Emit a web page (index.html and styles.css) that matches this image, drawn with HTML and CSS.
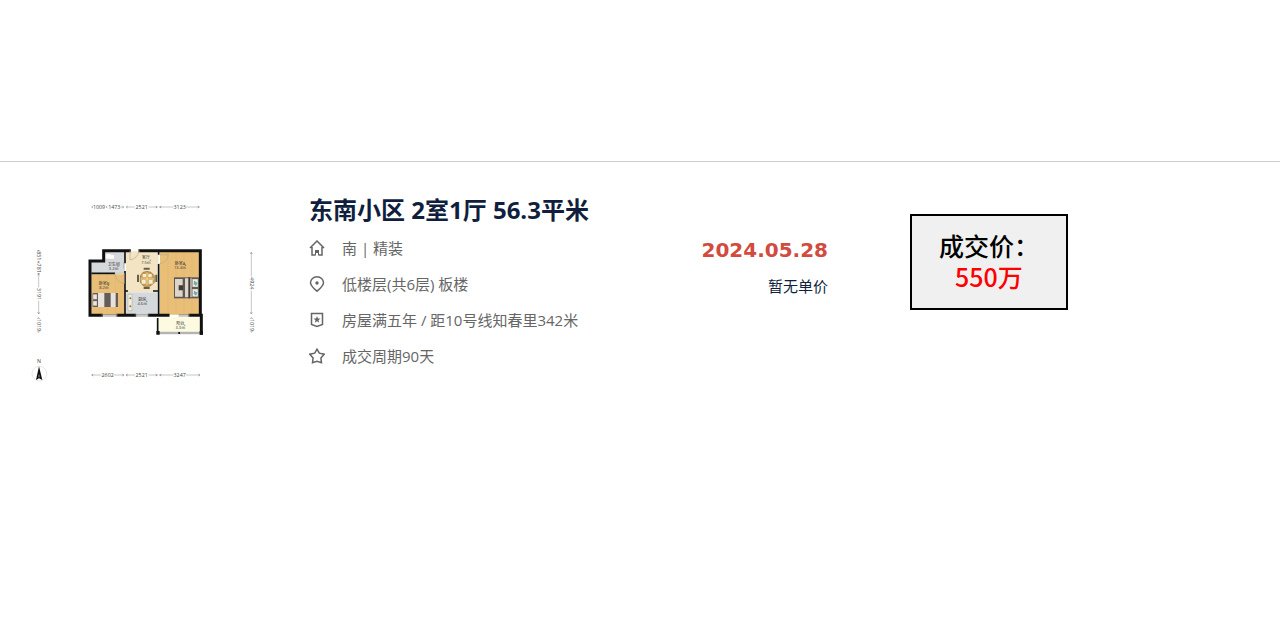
FILE: index.html
```
<!DOCTYPE html>
<html lang="zh-CN">
<head>
    <meta charset="UTF-8">
    <meta name="viewport" content="width=device-width, initial-scale=1.0">
    <title>成交记录</title>
    <link rel="stylesheet" href="styles.css">
</head>
<body>
<main class="record">
    <!-- Floor plan -->
    <svg class="plan" viewBox="0 0 750 600" role="img" aria-label="户型图">
        <!-- Floors -->
        <path fill="#d5d9dc" d="M253 184h62v65H214v-34h39z"/>
        <path fill="#e9bf78" d="M214 253h100v122H214zM420 186h121v188H420z"/>
        <path fill="#f3e5c4" d="M318 184h98v123h-98z"/>
        <path fill="#d5d9dc" d="M318 307h96v66h-96z"/>
        <path fill="#fcfbe2" d="M415 382h128v45H415z"/>
        <path class="boards" d="M444 186v188M468 186v188M492 186v188M516 186v188M238 253v122M262 253v122M286 253v122"/>

        <!-- Walls -->
        <path class="wall" d="M328 182h-77v31h-41v163h34M294 376h50M388 376h56M360 182h181v194h-31M544 376v54"/>
        <path class="wall-thin" d="M315 182v38M315 243v133M214 250h71M416 182v12M416 222v154M316 303h8M399 303h16M413 384v48"/>
        <path class="window" d="M244 374h50M244 378h50M344 374h44M344 378h44M476 374h34M476 378h34M414 427h130M414 431h130"/>
        <path fill="#111" d="M409 423h10v11h-10zM539 423h10v11h-10zM475 426h5v6h-5z"/>

        <!-- Doors -->
        <path class="door" d="M330 182v28q22-4 28-28M417 194h28q-3 24-28 28M285 250h28v31q-26-4-28-31M311 216v20"/>

        <!-- Bathroom -->
        <path fill="#fff" stroke="#bbb" d="M257 191h14l3 3h9v13h-26z"/>

        <!-- Beds -->
        <path fill="#655c57" d="M218 309h76v42h-76z"/>
        <path fill="#e7e2de" d="M234 309h19v42h-19zM272 309h15v42h-15z"/>
        <path fill="#f1e5e1" stroke="#777" d="M219 313h12v15h-12zM219 333h12v14h-12z"/>
        <path fill="#5f5652" d="M462 262h75v63h-75z"/>
        <path fill="#ddd5ca" d="M465 267h23v53h-23zM495 265h20v57h-20z"/>
        <path fill="#3f3b3a" d="M476 286h13v15h-13zM505 262h6v63h-6z"/>
        <path fill="#f0e9dc" stroke="#777" d="M517 267h17v24h-17zM517 297h17v23h-17z"/>
        <path fill="#6badb5" d="M522 272l11 6-5 10-7-6zM522 302l11 6-5 9-7-6z"/>

        <!-- Dining table -->
        <path fill="#c99d55" stroke="#94763f" stroke-width="2" d="M369 247l12-3 12 3 10 10v20l-10 10-12 4-12-4-8-10v-20z"/>
        <path fill="#f8edcf" d="M368 252h10v10h-10zM385 252h10v10h-10zM365 270h12v11h-12zM386 270h12v11h-12z"/>
        <path fill="none" stroke="#f4d99a" stroke-width="3" d="M381 248v38M362 267h40"/>
        <path class="chair" d="M371 236h18M371 294h18M354 254v22M409 254v22"/>
        <path fill="#f4efdb" stroke="#8b8566" d="M324 313h12v49h-12z"/>
        <circle cx="331" cy="325" r="3" fill="#7a7657"/>
        <circle cx="331" cy="349" r="3" fill="#7a7657"/>

        <!-- Room labels -->
        <g class="room">
            <text x="281" y="227">卫生间</text><text x="281" y="240">3.2㎡</text>
            <text x="378" y="208">客厅</text><text x="378" y="221">7.5㎡</text>
            <text x="480" y="224">卧室A</text><text x="480" y="237">13.4㎡</text>
            <text x="252" y="285">卧室B</text><text x="252" y="298">8.2㎡</text>
            <text x="367" y="332">厨房</text><text x="367" y="344">4.6㎡</text>
            <text x="481" y="405">阳台</text><text x="481" y="417">3.3㎡</text>
        </g>

        <!-- Dimensions -->
        <path class="dim-line" d="M302 51h10M318 51h26M386 51h26M418 51h42M498 51h40M216 555h28M282 555h30M318 555h27M386 555h27M418 555h42M498 555h42M56 250v42M56 332v40M694 187v72M694 302v70"/>
        <path class="dim-arrow" d="M219 48l-4 3 4 3M262 48l-4 3 4 3M307 48l4 3-4 3M323 48l-4 3 4 3M407 48l5 3-5 3M424 48l-5 3 5 3M533 48l5 3-5 3M220 552l-5 3 5 3M307 552l5 3-5 3M323 552l-5 3 5 3M407 552l5 3-5 3M424 552l-5 3 5 3M535 552l5 3-5 3M53 256l3-4 3 4M53 367l3 5 3-5M691 192l3-5 3 5M691 367l3 5 3-5"/>
        <g class="dim">
            <text x="237" y="56">1009</text><text x="283" y="56">1473</text><text x="365" y="56">2521</text><text x="479" y="56">3123</text>
            <text x="263" y="560">2602</text><text x="365" y="560">2521</text><text x="479" y="560">3247</text>
            <text transform="translate(52 216) rotate(90)">‹851›‹781›</text>
            <text transform="translate(52 312) rotate(90)">3191</text>
            <text transform="translate(52 405) rotate(90)">‹1019›</text>
            <text transform="translate(690 280) rotate(90)">4924</text>
            <text transform="translate(690 405) rotate(90)">‹1019›</text>
            <text x="57" y="519">N</text>
        </g>

        <!-- Compass -->
        <circle cx="58" cy="551" r="22" fill="#fff" stroke="#ddd" stroke-width="2"/>
        <path fill="#111" d="M57 529l10 41-10-5-9 5z"/>
        <path fill="#ccc" d="M56 554h2v9l-1-1-1 1z"/>
    </svg>

    <!-- House information -->
    <section class="info">
        <h1>东南小区 2室1厅 56.3平米</h1>
        <ul>
            <li>
                <svg class="icon" viewBox="0 0 16 16" aria-hidden="true"><path d="M1 8l7-7 7 7M3 7v8h3M13 7v8h-3"/><path class="solid" d="M6 10h4v5.500H9V13H7v2.500H6z"/></svg>
                <span>南 | 精装</span>
            </li>
            <li>
                <svg class="icon" viewBox="0 0 16 16" aria-hidden="true"><path d="M8 15.200C5.500 13 1.500 10 1.500 6.800a6.500 6 0 0 1 13 0C14.500 10 10.500 13 8 15.200z"/><circle class="solid" cx="8" cy="7" r="1.700"/></svg>
                <span>低楼层(共6层) 板楼</span>
            </li>
            <li>
                <svg class="icon" viewBox="0 0 16 16" aria-hidden="true"><path d="M2.500 1.500h11v11L8 14.500l-5.500-2z"/><path class="solid" d="M8 4l1 2.500 2.500.1-2 1.600.7 2.500L8 9.300l-2.200 1.400.7-2.500-2-1.600L7 6.500z"/></svg>
                <span>房屋满五年 / 距10号线知春里342米</span>
            </li>
            <li>
                <svg class="icon" viewBox="0 0 16 16" aria-hidden="true"><path d="M8 1.200l2.300 4 4.900 1-3.300 3.700.6 4.800L8 13.300l-4.500 1.400.6-4.800L.8 6.200l4.900-1z"/></svg>
                <span>成交周期90天</span>
            </li>
        </ul>
    </section>

    <!-- Deal date -->
    <section class="deal">
        <time class="deal-date" datetime="2024-05-28">2024.05.28</time>
        <span class="unit-price">暂无单价</span>
    </section>

    <!-- Deal price -->
    <section class="price">
        <div>成交价：</div>
        <div class="price-value">550万</div>
    </section>
</main>
</body>
</html>
```
FILE: styles.css
```
body {
    margin: 0;
    font-family: "Open Sans", "Noto Sans CJK SC", sans-serif;
    background-color: #fff;
}

.record {
    display: flex;
    align-items: flex-start;
    margin-top: 161px;
    padding: 28px 212px 28px 20px;
    border-top: 1px solid #ccc;
}

.plan {
    flex: none;
    width: 250px;
    height: 200px;
    margin-right: 39px;
}

.wall {
    fill: none;
    stroke: #111;
    stroke-width: 9;
    stroke-linecap: square;
}

.wall-thin {
    fill: none;
    stroke: #111;
    stroke-width: 5;
}

.window {
    stroke: #777;
    stroke-width: 2;
}

.door {
    fill: none;
    stroke: #b5a98d;
    stroke-width: 2;
}

.boards {
    stroke: #dfae66;
    stroke-width: 1;
}

.chair {
    stroke: #665f50;
    stroke-width: 6;
}

.room {
    fill: #333;
    font-size: 12px;
    text-anchor: middle;
}

.dim {
    fill: #444;
    font-size: 16px;
    text-anchor: middle;
}

.dim-line {
    stroke: #aaa;
    stroke-width: 2;
}

.dim-arrow {
    fill: none;
    stroke: #888;
    stroke-width: 2;
}

.info {
    flex: 1;
}

.info h1 {
    margin: 0;
    color: #0f1f3d;
    font-size: 24px;
    line-height: 40px;
    white-space: nowrap;
}

.info ul {
    margin: 0;
    padding: 0;
    list-style: none;
}

.info li {
    display: flex;
    align-items: center;
    gap: 17px;
    color: #666;
    font-size: 15px;
    line-height: 36px;
    white-space: nowrap;
}

.icon {
    width: 16px;
    height: 16px;
    fill: none;
    stroke: #666;
    stroke-width: 1.5;
}

.icon .solid {
    fill: #666;
    stroke: none;
}

.deal {
    display: flex;
    flex-direction: column;
    align-items: flex-end;
    margin: 42px 82px 0 20px;
    line-height: 36px;
}

.deal-date {
    color: #d14b40;
    font-family: "DejaVu Sans", sans-serif;
    font-size: 20px;
    font-weight: bold;
}

.unit-price {
    color: #0f1f3d;
    font-size: 15px;
}

.price {
    box-sizing: border-box;
    width: 158px;
    margin-top: 24px;
    padding: 14px 0 16px;
    border: 2px solid #000;
    background-color: #f0f0f0;
    font-family: "Noto Sans CJK SC", sans-serif;
    font-size: 25px;
    font-weight: 500;
    line-height: 31px;
    text-align: center;
}

.price-value {
    color: #f00;
}
```
